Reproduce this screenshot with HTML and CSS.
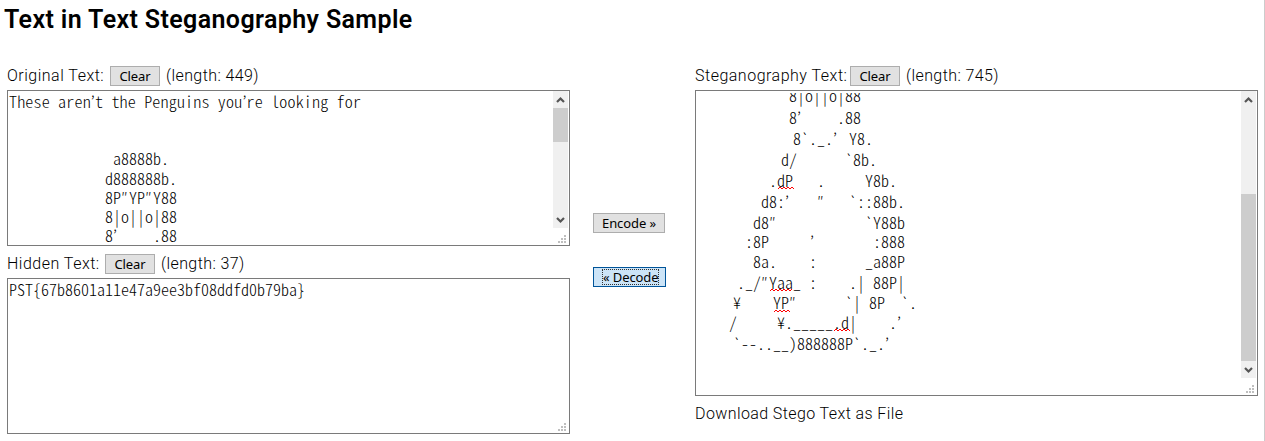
FILE: index.html
```
<!DOCTYPE html>
<html lang="en">
<head>
<meta charset="utf-8">
<title>Text in Text Steganography Sample</title>
<link rel="stylesheet" href="styles.css">
</head>
<body>
<main class="page">
  <h1 class="title"><span class="t-title">Text in Text Steganography Sample</span></h1>
  <div class="columns">
    <section class="column">
      <div class="label"><span class="l-original">Original Text:</span><button class="btn clear">Clear</button><span class="l-len">(length: 449)</span></div>
      <div class="area">
        <svg class="art" width="545" height="154" viewBox="8 91 545 154">
          <text y="108" x="9" textLength="352">These aren’t the Penguins you’re looking for</text>
          <text y="165" x="113">a8888b.</text>
          <text y="185" x="105">d888888b.</text>
          <text y="204" x="105 113 121 129 137 145 153 161 169">8P″YP″Y88</text>
          <text y="223" x="105">8|o||o|88</text>
          <text y="242"><tspan x="105">8’</tspan><tspan x="153">.88</tspan></text>
        </svg>
        <div class="side">
          <div class="scroll">
            <svg class="arrow" viewBox="0 0 15 16"><path d="M4 10.5L7.5 7L11 10.5"/></svg>
            <div class="thumb top"></div><div class="track"></div>
            <svg class="arrow" viewBox="0 0 15 16"><path d="M4 6.5L7.5 10L11 6.5"/></svg>
          </div>
          <svg class="grip" viewBox="0 0 8 8"><path d="M6 0h2v2h-2zM3 3h2v2h-2zM6 3h2v2h-2zM0 6h2v2h-2zM3 6h2v2h-2zM6 6h2v2h-2z"/></svg>
        </div>
      </div>
      <div class="label second"><span class="l-hidden">Hidden Text:</span><button class="btn clear">Clear</button><span class="l-len">(length: 37)</span></div>
      <div class="area hidden-area">
        <svg class="art" width="545" height="154" viewBox="8 279 545 154">
          <text y="296" x="9" textLength="296">PST{67b8601a11e47a9ee3bf08ddfd0b79ba}</text>
        </svg>
        <div class="side">
          <svg class="grip" viewBox="0 0 8 8"><path d="M6 0h2v2h-2zM3 3h2v2h-2zM6 3h2v2h-2zM0 6h2v2h-2zM3 6h2v2h-2zM6 6h2v2h-2z"/></svg>
        </div>
      </div>
    </section>
    <div class="actions">
      <button class="btn encode">Encode »</button>
      <button class="btn decode"><span class="focus">« Decode</span></button>
    </div>
    <section class="column">
      <div class="label"><span class="l-stego">Steganography Text:</span><button class="btn clear">Clear</button><span class="l-len">(length: 745)</span></div>
      <div class="area large">
        <svg class="art inset" width="545" height="301" viewBox="696 93 545 301">
          <text y="102" x="789">8|o||o|88</text>
          <text y="124"><tspan x="789">8’</tspan><tspan x="837">.88</tspan></text>
          <text y="145"><tspan x="793">8`._.’</tspan><tspan x="849">Y8.</tspan></text>
          <text y="166"><tspan x="781">d/</tspan><tspan x="845">`8b.</tspan></text>
          <text y="187"><tspan x="769">.dP</tspan><tspan x="817">.</tspan><tspan x="865">Y8b.</tspan></text>
          <text y="208"><tspan x="761">d8:’</tspan><tspan x="817">″</tspan><tspan x="849">`::88b.</tspan></text>
          <text y="229"><tspan x="753">d8″</tspan><tspan x="865">`Y88b</tspan></text>
          <text y="248"><tspan x="745">:8P</tspan><tspan x="810">’</tspan><tspan x="873">:888</tspan></text>
          <text y="268"><tspan x="753">8a.</tspan><tspan x="809">:</tspan><tspan x="865">_a88P</tspan></text>
          <text y="289"><tspan x="737 745 753 761 769 777 785 793">._/″Yaa_</tspan><tspan x="809">:</tspan><tspan x="849">.|</tspan><tspan x="873">88P|</tspan></text>
          <text y="309"><tspan x="733">¥</tspan><tspan x="773">YP″</tspan><tspan x="845">`|</tspan><tspan x="869">8P</tspan><tspan x="901">`.</tspan></text>
          <text y="329"><tspan x="729">/</tspan><tspan x="777">¥._____.d|</tspan><tspan x="889">.’</tspan></text>
          <text y="350"><tspan x="733">`--..__)888888P`._.’</tspan></text>
          <path class="squiggle" d="M778 189l2-2 2 2 2-2 2 2 2-2 2 2 2-2 2 2"/>
          <path class="squiggle" d="M770 291l2-2 2 2 2-2 2 2 2-2 2 2 2-2 2 2 2-2 2 2 2-2"/>
          <path class="squiggle" d="M774 312l2-2 2 2 2-2 2 2 2-2 2 2 2-2 2 2"/>
          <path class="squiggle" d="M834 331l2-2 2 2 2-2 2 2 2-2 2 2 2-2 2 2"/>
        </svg>
        <div class="side">
          <div class="scroll">
            <svg class="arrow" viewBox="0 0 15 16"><path d="M4 10.5L7.5 7L11 10.5"/></svg>
            <div class="track"></div><div class="thumb bottom"></div>
            <svg class="arrow" viewBox="0 0 15 16"><path d="M4 6.5L7.5 10L11 6.5"/></svg>
          </div>
          <svg class="grip" viewBox="0 0 8 8"><path d="M6 0h2v2h-2zM3 3h2v2h-2zM6 3h2v2h-2zM0 6h2v2h-2zM3 6h2v2h-2zM6 6h2v2h-2z"/></svg>
        </div>
      </div>
      <div class="download">Download Stego Text as File</div>
    </section>
  </div>
</main>
</body>
</html>
```
FILE: styles.css
```
* { box-sizing: border-box; }
body { margin: 0; background: #fff; color: #000; font: 300 16px/20px Roboto, sans-serif; overflow: hidden; }
.page { width: 1265px; height: 441px; border-right: 1px solid #ccc; overflow: hidden; }
.title { margin: 0; padding: 5px 0 0 4px; height: 65px; font-size: 25px; line-height: 30px; font-weight: 600; white-space: nowrap; letter-spacing: .38px; }
.columns { display: flex; padding-left: 7px; }
.column { width: 563px; flex: none; }
.label { display: flex; height: 25px; white-space: nowrap; }
.label span { letter-spacing: .5px; line-height: 22px; }
.second { margin-top: 7px; }
.l-original { width: 103px; }
.l-hidden { width: 98px; }
.l-stego { width: 155px; }
.label .l-len { margin-left: 6px; letter-spacing: .4px; }
.btn { font: 13px/16px "Noto Sans", sans-serif; color: #000; background: #e1e1e1; border: 1px solid #adadad; border-radius: 0; height: 20px; padding: 0; text-align: center; white-space: nowrap; letter-spacing: -.1px; }
.clear { width: 50px; margin-top: 1px; }
.area { display: flex; height: 156px; border: 1px solid #7a7a7a; background: #fff; overflow: hidden; }
.large { height: 306px; }
.art { display: block; flex: none; font-family: "Noto Sans CJK JP", monospace; font-size: 16px; font-weight: 300; font-feature-settings: "hwid"; }
.inset { margin-top: 2px; }
.squiggle { fill: none; stroke: #f00; stroke-width: 1; }
.side { display: flex; flex-direction: column; width: 15px; height: 100%; }
.scroll { display: flex; flex-direction: column; flex: 1; background: #f0f0f0; margin-bottom: 7px; }
.arrow { width: 15px; height: 17px; flex: none; }
.arrow path { fill: none; stroke: #555; stroke-width: 2.2; }
.track { flex: 1; }
.thumb { background: #cdcdcd; }
.thumb.top { height: 34px; }
.thumb.bottom { height: 167px; }
.grip { width: 8px; height: 8px; flex: none; fill: #bfbfbf; margin: auto 0 2px 5px; }
.actions { width: 125px; flex: none; padding: 148px 0 0 23px; display: flex; flex-direction: column; gap: 34px; }
.encode { width: 72px; }
.decode { width: 73px; background: #cce4f7; border-color: #005499; display: flex; justify-content: flex-end; align-items: center; padding-right: 6px; }
.focus { display: block; width: 57px; height: 16px; line-height: 15px; border: 1px dotted #333; }
.download { padding-top: 8px; letter-spacing: .4px; }
```
